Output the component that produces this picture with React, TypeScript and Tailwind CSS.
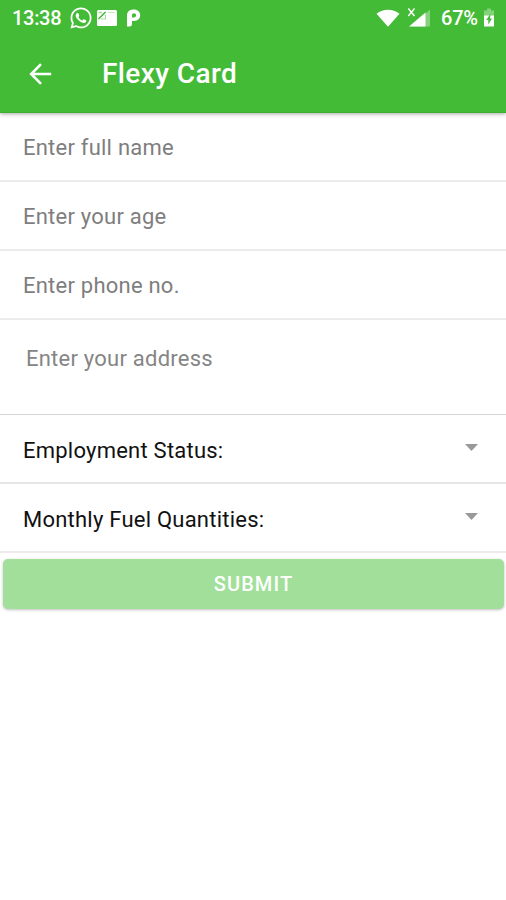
import React from "react";
import clsx from "clsx";
import { FaWhatsapp } from "react-icons/fa";

const fields = ["Enter full name", "Enter your age", "Enter phone no."];

const selects = [
  { label: "Employment Status:", border: "border-[#e6e6e6]" },
  { label: "Monthly Fuel Quantities:", border: "border-[#f0ebeb]" },
];

function StatusBar() {
  return (
    <div className="flex h-9 items-center justify-between pl-3 pr-[11px] text-white">
      <div className="flex items-center">
        <span className="w-[57px] whitespace-nowrap text-[20px] font-medium leading-9 tracking-[-0.3px]">13:38</span>
        <FaWhatsapp className="h-6 w-6" />
        <svg className="ml-1 h-[18px] w-5" viewBox="0 0 20 18">
          <rect y="1" width="20" height="16" rx="1.500" fill="currentColor" />
          <path d="M1.500 10 8.500 3" fill="none" stroke="#43bb36" strokeWidth="1.600" />
          <path d="M4 10h4.500V6" fill="none" stroke="#43bb36" strokeWidth="1" opacity=".5" />
          <path d="M1.500 3.500h3.500" stroke="#43bb36" strokeWidth="1.500" opacity=".5" />
          <path d="M10.500 3.500h7" stroke="#43bb36" strokeWidth="1" opacity=".3" />
        </svg>
        <svg className="ml-[9px] h-5 w-[15px]" viewBox="0 0 15 20">
          <path
            fillRule="evenodd"
            fill="currentColor"
            d="M1 7.500C1 3.500 3.800 1.500 7.800 1.500c4 0 6.400 2.500 6.400 5.800s-2.500 5.700-5.900 5.700H6v2.500Q6 18.500 3.500 18.500H1zM6 9.500h2a2.100 2.100 0 0 0 0-4.300C6.600 5.200 6 6 6 7.300z"
          />
        </svg>
      </div>
      <div className="flex items-center">
        <svg className="h-[18px] w-6" viewBox="0 0 24 18" fill="currentColor">
          <path d="M.5 4.700C7.300-.6 16.700-.6 23.500 4.700L12 17.800z" />
        </svg>
        <svg className="ml-[6px] h-5 w-6" viewBox="0 0 24 20">
          <path d="M24 1.500v17H5z" fill="currentColor" opacity=".35" />
          <path d="M19.500 4.500v14H3z" fill="currentColor" />
          <path d="M2.300.5 8.500 8M8.500 .5 2.300 8" stroke="currentColor" strokeWidth="1.400" />
        </svg>
        <span className="ml-[11px] w-[42px] whitespace-nowrap text-[20px] font-medium leading-9 tracking-[-0.2px]">67%</span>
        <svg className="h-5 w-3" viewBox="0 0 12 20" fill="currentColor">
          <path d="M4 .5h4v2h3v6H1v-6h3z" opacity=".35" />
          <path d="M1 7.500h10v11H1z" />
          <path d="M7.500 5.500 3.300 12h2v4.500L9 10.500H7z" fill="#43bb36" />
        </svg>
      </div>
    </div>
  );
}

export default function App() {
  return (
    <div className="flex h-[900px] w-[506px] flex-col overflow-hidden bg-white font-['Roboto',sans-serif]">
      <header className="z-10 h-[113px] shrink-0 border-b border-[#3fae33] bg-[#43bb36] shadow-[0_1px_4px_rgba(0,0,0,0.35)]">
        <StatusBar />
        <div className="flex h-[76px] items-center pl-7 text-white">
          <svg className="h-6 w-6" viewBox="0 0 24 24" fill="none" stroke="currentColor" strokeWidth="2.600">
            <path d="M23.200 12H3.500M13 2.200 3.200 12l9.800 9.800" />
          </svg>
          <h1 className="ml-[50px] text-[28px] font-medium leading-9 tracking-[0.4px]">Flexy Card</h1>
        </div>
      </header>

      <main className="text-[22px] leading-7 tracking-[0.23px]">
        {fields.map((field) => (
          <div key={field} className="flex h-[69px] items-center border-b-2 border-[#ebebeb] pl-[23px] pt-[2px] text-[#7e7e7e]">
            {field}
          </div>
        ))}

        <div className="h-[95px] border-b border-[#d5d5d5] pl-[26px] pt-[25px] text-[#858585]">
          Enter your address
        </div>

        {selects.map(({ label, border }) => (
          <div
            key={label}
            className={clsx("flex h-[69px] items-center justify-between border-b-2 pl-[23px] pr-7 text-[#111]", border)}
          >
            <span className="mt-1">{label}</span>
            <svg className="mb-0.5 h-[7px] w-[13px]" viewBox="0 0 13 7" fill="#999">
              <path d="M0 0h13L6.500 7z" />
            </svg>
          </div>
        ))}

        <button className="ml-[3px] mt-[6px] flex h-[50px] w-[501px] items-center justify-center rounded-[5px] bg-[#a1df9a] text-[20px] font-medium tracking-[1.1px] text-white shadow-[0_1px_3px_rgba(0,0,0,0.25)]">
          SUBMIT
        </button>
      </main>
    </div>
  );
}
